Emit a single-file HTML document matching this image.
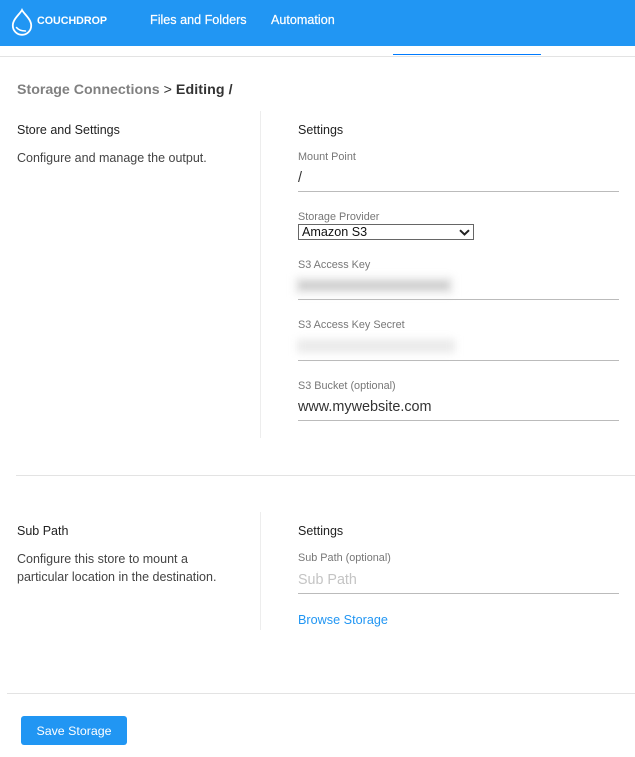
<!DOCTYPE html>
<html><head><meta charset="utf-8"><title>Storage</title>
<style>
html,body{margin:0;padding:0;background:#fff}
body{width:635px;height:757px;position:relative;overflow:hidden;font-family:"Liberation Sans",Arial,sans-serif;color:#222}
.a{position:absolute;white-space:nowrap}
.h{font-size:12.5px;line-height:16px;color:#222}
.l{font-size:10.85px;line-height:14px;color:#777;margin-top:1px}
.ln{position:absolute;height:1px}
.u{left:298px;width:321px;background:#bbb}
.b{position:absolute;background:#e3e3e3;height:1px}
.blur{position:absolute;filter:blur(4px)}
</style></head><body>
<div class="a" style="left:0;top:0;width:635px;height:46px;background:#2196f3"></div>
<svg class="a" style="left:10px;top:8px" width="24" height="30" viewBox="0 0 24 30" fill="none" stroke="#fff" stroke-width="1.8" stroke-linecap="round"><path d="M12 2C10 6 2.800 11 2.800 17.600A9.200 9.200 0 0 0 21.200 17.600C21.200 11 14 6 12 2Z"/><path d="M6.500 19.500C8.500 22 12 23 15.500 23" stroke-width="1.500"/></svg>
<div class="a" style="left:37px;top:14px;font-size:10.7px;line-height:15px;font-weight:700;color:#fff">COUCHDROP</div>
<div class="a" style="left:150px;top:12px;font-size:12.6px;line-height:16px;color:#fff;-webkit-text-stroke:.2px #fff">Files and Folders</div>
<div class="a" style="left:271px;top:12px;font-size:12.6px;line-height:16px;color:#fff;-webkit-text-stroke:.2px #fff">Automation</div>
<div class="ln" style="left:393px;top:54px;width:148px;height:1px;background:#007bff"></div>
<div class="b" style="left:0;top:56px;width:635px"></div>

<div class="a" style="left:17px;top:80px;font-size:14.2px;line-height:20px;font-weight:700;color:#808080">Storage Connections <span style="font-weight:400;color:#333">&gt;</span> <span style="color:#333;letter-spacing:.1px">Editing /</span></div>

<div class="a h" style="left:17px;top:122px">Store and Settings</div>
<div class="a h" style="left:17px;top:150px;color:#444">Configure and manage the output.</div>
<div class="ln" style="left:260px;top:111px;width:1px;height:327px;background:#ededed"></div>

<div class="a h" style="left:298px;top:122px">Settings</div>
<div class="a l" style="left:298px;top:149px">Mount Point</div>
<div class="a" style="left:298px;top:169px;font-size:14.4px;line-height:18px;color:#333">/</div>
<div class="ln u" style="top:191px"></div>

<div class="a l" style="left:298px;top:209px">Storage Provider</div>
<div class="a" style="left:298px;top:224px;width:174px;height:14px;border:1px solid #666;background:#fff"></div>
<div class="a" style="left:302px;top:224px;font-size:12.6px;line-height:16px;color:#111">Amazon S3</div>
<svg class="a" style="left:459px;top:229px" width="11" height="7" viewBox="0 0 11 7" fill="none" stroke="#222" stroke-width="2"><path d="M1 1.200L5.500 5.500L10 1.200"/></svg>

<div class="a l" style="left:298px;top:257px">S3 Access Key</div>
<div class="blur" style="left:295px;top:277px;width:158px;height:17px;background:#e8e8e8"></div>
<div class="blur" style="left:300px;top:282px;width:148px;height:7px;background:#cfcfcf;filter:blur(3px)"></div>
<div class="ln u" style="top:299px"></div>

<div class="a l" style="left:298px;top:317px">S3 Access Key Secret</div>
<div class="blur" style="left:297px;top:339px;width:158px;height:14px;background:#ebebeb"></div>
<div class="ln u" style="top:360px"></div>

<div class="a l" style="left:298px;top:378px">S3 Bucket (optional)</div>
<div class="a" style="left:298px;top:398px;font-size:14.4px;line-height:18px;color:#333">www.mywebsite.com</div>
<div class="ln u" style="top:420px"></div>

<div class="b" style="left:16px;top:475px;width:619px"></div>

<div class="a h" style="left:17px;top:523px">Sub Path</div>
<div class="a h" style="left:17px;top:551px;color:#444">Configure this store to mount a</div>
<div class="a h" style="left:17px;top:569px;color:#444">particular location in the destination.</div>
<div class="ln" style="left:260px;top:512px;width:1px;height:118px;background:#ededed"></div>

<div class="a h" style="left:298px;top:523px">Settings</div>
<div class="a l" style="left:298px;top:550px">Sub Path (optional)</div>
<div class="a" style="left:298px;top:571px;font-size:14.3px;line-height:18px;color:#c4c4c4">Sub Path</div>
<div class="ln u" style="top:593px"></div>
<div class="a h" style="left:298px;top:612px;color:#2196f3;font-size:12.65px">Browse Storage</div>

<div class="b" style="left:7px;top:693px;width:628px"></div>
<div class="a" style="left:21px;top:716px;width:106px;height:29px;background:#2196f3;border-radius:3px;color:#fff;font-size:12.4px;line-height:30px;text-align:center">Save Storage</div>
</body></html>
